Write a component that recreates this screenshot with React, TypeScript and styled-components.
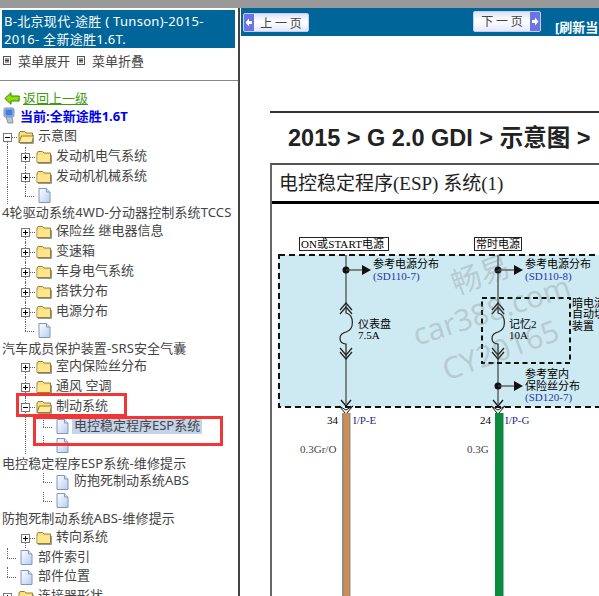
import styled, { createGlobalStyle } from 'styled-components';

const GlobalStyle = createGlobalStyle`
  html, body { margin: 0; padding: 0; height: 100%; overflow: hidden; background: #fff; }
  body { font-family: "Noto Sans", "Noto Sans CJK SC", sans-serif; }
`;

// --- PAGE FRAME ---
const Page = styled.div`
  position: relative;
  width: 599px;
  height: 596px;
  overflow: hidden;
  display: flex;
  flex-direction: column;
`;

const TopStrip = styled.div`
  height: 8px;
  flex: none;
  background: #999;
`;

const Panes = styled.div`
  flex: 1;
  min-height: 0;
  display: flex;
`;

const Sidebar = styled.aside`
  width: 240px;
  flex: none;
  overflow: hidden;
  padding-top: 2px;
  box-sizing: border-box;
  border-right: 2px solid #444;
`;

const Main = styled.main`
  flex: 1;
  min-width: 0;
  overflow: hidden;
  padding-left: 1px;
`;

// --- SIDEBAR ---
const BookTitle = styled.div`
  margin: 0 3px 0 2px;
  height: 38px;
  padding: 2px 2px 0 2px;
  box-sizing: border-box;
  background: #006699;
  color: #fff;
  font-size: 13px;
  line-height: 18px;
  letter-spacing: 0.3px;
`;

const MenuRow = styled.div`
  display: flex;
  align-items: center;
  height: 22px;
  margin-top: 1px;
  padding-left: 3px;
  font-size: 13px;
  color: #444;
`;

const MenuToggle = styled.span`
  display: flex;
  align-items: center;
  gap: 7px;
  margin-right: 7px;
`;

const Rule = styled.hr`
  margin: 9px 0 0;
  border: 0;
  height: 1px;
  background: #888;
`;

const BackRow = styled.div`
  display: flex;
  align-items: center;
  gap: 3px;
  height: 18px;
  margin-top: 8px;
  padding-left: 4px;
`;

const BackLink = styled.a`
  font-size: 13px;
  line-height: 18px;
  color: #3f9a10;
  text-decoration: underline;
`;

const CurrentRow = styled.div`
  display: flex;
  align-items: center;
  gap: 5px;
  height: 18px;
  padding: 0 0 2px 3px;
  box-sizing: border-box;
  font-size: 13px;
  font-weight: 700;
  color: #0000f0;
`;

const Tree = styled.div`
  margin-top: 2px;
`;

const RowBox = styled.div<{ $h: number }>`
  display: flex;
  align-items: stretch;
  height: ${p => p.$h}px;
  margin-left: -2px;
  white-space: nowrap;
`;

const Cell = styled.span<{ $line: Line }>`
  position: relative;
  width: 18px;
  flex: none;
  &::before {
    content: '';
    display: ${p => (p.$line === 'none' ? 'none' : 'block')};
    position: absolute;
    left: 9px;
    top: ${p => (p.$line === 'down' ? '50%' : '0')};
    bottom: ${p => (p.$line === 'corner' ? '50%' : '0')};
    border-left: 1px dotted #666;
  }
  &::after {
    content: '';
    display: ${p => (p.$line === 'corner' ? 'block' : 'none')};
    position: absolute;
    left: 9px;
    right: 0;
    top: 50%;
    border-top: 1px dotted #666;
  }
`;

const ToggleBox = styled.span`
  position: absolute;
  left: 5px;
  top: 50%;
  width: 9px;
  height: 9px;
  margin-top: -4px;
  box-sizing: border-box;
  border: 1px solid #777;
  background: #fff;
  z-index: 1;
  &::after {
    content: '';
    position: absolute;
    left: 8px;
    top: 3px;
    width: 5px;
    border-top: 1px dotted #666;
  }
  svg { display: block; }
`;

const IconSlot = styled.span`
  width: 20px;
  flex: none;
  display: flex;
  align-items: center;
  justify-content: center;
  svg { display: block; }
`;

const RowLabel = styled.span<{ $selected?: boolean; $heading?: boolean }>`
  align-self: ${p => (p.$selected ? 'flex-start' : 'center')};
  margin-left: ${p => (p.$heading ? '4px' : p.$selected ? '0' : '2px')};
  margin-top: ${p => (p.$selected ? '0' : p.$heading ? '0' : '-3px')};
  padding: 0 ${p => (p.$selected ? '2px' : '0')};
  background: ${p => (p.$selected ? '#c2d3ea' : 'transparent')};
  font-size: 13px;
  line-height: 17px;
  letter-spacing: ${p => (p.$heading ? '0.12px' : '0')};
  color: #444;
`;

const RedFrame = styled.div<{ $x: number; $y: number; $w: number; $h: number }>`
  position: absolute;
  left: ${p => p.$x}px;
  top: ${p => p.$y}px;
  width: ${p => p.$w}px;
  height: ${p => p.$h}px;
  box-sizing: border-box;
  border: 3px solid #f43535;
  pointer-events: none;
`;

// --- MAIN PANE ---
const PagerBar = styled.div`
  height: 28px;
  background: #006699;
`;

const PagerRow = styled.div`
  display: flex;
  align-items: flex-start;
  height: 28px;
  padding-left: 2px;
  white-space: nowrap;
`;

const PagerButton = styled.button<{ $next?: boolean }>`
  display: flex;
  flex: none;
  flex-direction: ${p => (p.$next ? 'row-reverse' : 'row')};
  align-items: stretch;
  width: ${p => (p.$next ? '68px' : '66px')};
  height: ${p => (p.$next ? '21px' : '19px')};
  margin: ${p => (p.$next ? '3px 0 0 164px' : '5px 0 0 0')};
  padding: 0;
  border: 1px solid #c8ccf4;
  border-radius: 2px;
  background: linear-gradient(#dfe3fb, #ffffff 45%, #e6e8fa);
  font: 12px "Noto Sans CJK SC", sans-serif;
  color: #444;
  overflow: hidden;
`;

const PagerArrow = styled.span`
  width: 10px;
  flex: none;
  display: flex;
  align-items: center;
  justify-content: center;
  background: #6c74e4;
`;

const PagerText = styled.span`
  flex: 1;
  text-align: center;
  line-height: 17px;
`;

const Refresh = styled.span`
  flex: none;
  margin: 11px 0 0 14px;
  font-size: 13px;
  line-height: 17px;
  font-weight: 700;
  color: #fff;
`;

const Sheet = styled.div`
  margin: 75px 0 0 29px;
  border-top: 2px solid #333;
  width: 400px;
`;

const SheetHeading = styled.h1`
  margin: 0;
  height: 50px;
  padding: 12px 0 0 18px;
  box-sizing: border-box;
  font: 700 23.5px/26px "Liberation Sans", "Noto Sans CJK SC", sans-serif;
  color: #222;
  white-space: nowrap;
`;

const DiagramFrame = styled.div`
  border-top: 2px solid #555;
  border-left: 2px solid #666;
`;

const DiagramTitle = styled.h2`
  margin: 0;
  height: 36px;
  padding-left: 7px;
  border-bottom: 3px solid #000;
  font: 400 19px/38px "Liberation Serif", "Noto Sans CJK SC", serif;
  color: #222;
  white-space: nowrap;
`;

const DiagramSvg = styled.svg`
  display: block;
  font-family: "Liberation Serif", "Noto Sans CJK SC", serif;
  font-size: 11px;
`;

// --- ICONS ---
const Folder = ({ open }: { open?: boolean }) => (
  <svg width="16" height="14" viewBox="0 0 16 14">
    <path d="M1 3 L2 1.5 H6.5 L8 3 H14.5 V12.5 H1 Z" fill="#fbdf78" stroke="#94803a" />
    {open ? (
      <path d="M1 12.5 L3.5 6 H15.5 L14 12.5 Z" fill="#ffeb98" stroke="#94803a" />
    ) : (
      <path d="M1.5 5 H14 V12 H1.5 Z" fill="#fde68c" />
    )}
    <path d="M2 13.5 H15.5 V5" fill="none" stroke="#999" />
  </svg>
);

const Doc = () => (
  <svg width="13" height="15" viewBox="0 0 13 15">
    <defs>
      <linearGradient id="docFill" x1="0" y1="0" x2="1" y2="1">
        <stop offset="0" stopColor="#ffffff" />
        <stop offset="1" stopColor="#b9cdf0" />
      </linearGradient>
    </defs>
    <path d="M1 .5 H8.5 L12 4 V14.5 H1 Z" fill="url(#docFill)" stroke="#8096c0" />
    <path d="M8.5 .5 V4 H12" fill="#dfe8f8" stroke="#8096c0" />
  </svg>
);

const MenuIcon = () => (
  <svg width="8" height="9" viewBox="0 0 8 9">
    <rect x=".5" y=".5" width="7" height="8" fill="#fff" stroke="#555" />
    <path d="M2 3 H6 M2 4.5 H6 M2 6 H6" stroke="#333" />
  </svg>
);

const BackArrow = () => (
  <svg width="16" height="13" viewBox="0 0 16 13">
    <path d="M.8 6.5 L7 .8 V4 H15.2 V9 H7 V12.2 Z" fill="#8fdc10" stroke="#2f8a00" />
  </svg>
);

const Computer = () => (
  <svg width="12" height="17" viewBox="0 0 12 17">
    <rect x="1" y="1" width="10" height="9" rx="1.5" fill="#9fc2ee" stroke="#7d8fa8" />
    <rect x="2.5" y="2.5" width="7" height="6" fill="#3f7fe0" />
    <path d="M3 10 L5 16 H10 L9 10 Z" fill="#b8c4d4" stroke="#8a96a8" />
  </svg>
);

const Glyph = ({ open }: { open?: boolean }) => (
  <svg width="7" height="7" viewBox="0 0 7 7">
    <path d={open ? 'M1 3.5 H6' : 'M1 3.5 H6 M3.5 1 V6'} stroke="#000" />
  </svg>
);

const PagerGlyph = ({ next }: { next?: boolean }) => (
  <svg width="8" height="9" viewBox="0 0 8 9">
    <path d={next ? 'M1 3 H4 V.5 L7.5 4.5 L4 8.5 V6 H1 Z' : 'M7 3 H4 V.5 L.5 4.5 L4 8.5 V6 H7 Z'} fill="#fff" />
  </svg>
);

// --- TREE DATA ---
type Line = 'none' | 'through' | 'down' | 'corner';
type Node = {
  lines?: Line[];
  toggle?: 'plus' | 'minus';
  icon?: 'folder' | 'open' | 'doc';
  label?: string;
  h: number;
  selected?: boolean;
};

const F = 20;
const D = 19;
const E = 18;
const T = 17.5;

const TREE: Node[] = [
  { lines: ['down'], toggle: 'minus', icon: 'open', label: '示意图', h: F },
  { lines: ['through', 'through'], toggle: 'plus', icon: 'folder', label: '发动机电气系统', h: F },
  { lines: ['through', 'through'], toggle: 'plus', icon: 'folder', label: '发动机机械系统', h: F },
  { lines: ['through', 'corner'], icon: 'doc', h: 17 },
  { label: '4轮驱动系统4WD-分动器控制系统TCCS', h: T },
  { lines: ['none', 'down'], toggle: 'plus', icon: 'folder', label: '保险丝 继电器信息', h: F },
  { lines: ['none', 'through'], toggle: 'plus', icon: 'folder', label: '变速箱', h: F },
  { lines: ['none', 'through'], toggle: 'plus', icon: 'folder', label: '车身电气系统', h: F },
  { lines: ['none', 'through'], toggle: 'plus', icon: 'folder', label: '搭铁分布', h: F },
  { lines: ['none', 'through'], toggle: 'plus', icon: 'folder', label: '电源分布', h: F },
  { lines: ['none', 'corner'], icon: 'doc', h: E },
  { label: '汽车成员保护装置-SRS安全气囊', h: T },
  { lines: ['none', 'down'], toggle: 'plus', icon: 'folder', label: '室内保险丝分布', h: F },
  { lines: ['none', 'through'], toggle: 'plus', icon: 'folder', label: '通风 空调', h: F },
  { lines: ['none', 'through'], toggle: 'minus', icon: 'open', label: '制动系统', h: F },
  { lines: ['none', 'through', 'corner'], icon: 'doc', label: '电控稳定程序ESP系统', h: D, selected: true },
  { lines: ['none', 'through', 'corner'], icon: 'doc', h: E },
  { label: '电控稳定程序ESP系统-维修提示', h: 18.5 },
  { lines: ['none', 'none', 'corner'], icon: 'doc', label: '防抱死制动系统ABS', h: D },
  { lines: ['none', 'none', 'corner'], icon: 'doc', h: E },
  { label: '防抱死制动系统ABS-维修提示', h: T },
  { lines: ['none', 'down'], toggle: 'plus', icon: 'folder', label: '转向系统', h: 21 },
  { lines: ['corner'], icon: 'doc', label: '部件索引', h: D },
  { lines: ['corner'], icon: 'doc', label: '部件位置', h: F },
  { lines: ['down'], toggle: 'plus', icon: 'folder', label: '连接器形状', h: F },
];

const TreeRow = ({ node }: { node: Node }) => {
  const lines = node.lines ?? [];
  return (
    <RowBox $h={node.h}>
      {lines.map((line, i) => (
        <Cell key={i} $line={line}>
          {node.toggle && i === lines.length - 1 && (
            <ToggleBox>
              <Glyph open={node.toggle === 'minus'} />
            </ToggleBox>
          )}
        </Cell>
      ))}
      {node.icon && (
        <IconSlot>
          {node.icon === 'doc' ? <Doc /> : <Folder open={node.icon === 'open'} />}
        </IconSlot>
      )}
      {node.label && (
        <RowLabel $selected={node.selected} $heading={!node.icon}>
          {node.label}
        </RowLabel>
      )}
    </RowBox>
  );
};

// --- WIRING DIAGRAM PARTS ---
const Fuse = ({ x }: { x: number }) => (
  <g fill="none" stroke="#222" strokeWidth="1.2">
    <path d={`M${x - 6} 309 L${x} 302 L${x + 6} 309 M${x - 6} 313 L${x} 306 L${x + 6} 313`} />
    <path d={`M${x} 306 V312 C${x + 8} 314 ${x + 9} 328 ${x} 331 C${x - 8} 333 ${x - 8} 342 ${x} 343 V358`} />
    <path d={`M${x - 6} 347 L${x} 354 L${x + 6} 347 M${x - 6} 351 L${x} 358 L${x + 6} 351`} />
  </g>
);

const Branch = ({ x, y }: { x: number; y: number }) => (
  <g>
    <circle cx={x} cy={y} r="3.5" fill="#111" />
    <path d={`M${x} ${y} H${x + 17}`} stroke="#444" strokeWidth="1.2" />
    <path d={`M${x + 16} ${y - 5} L${x + 25} ${y} L${x + 16} ${y + 5} Z`} fill="#111" />
  </g>
);

const WireEnd = ({ x }: { x: number }) => (
  <g>
    <path d={`M${x - 7} 405 L${x} 413 L${x + 7} 405 L${x} 409 Z`} fill="#fff" stroke="#111" />
    <path d={`M${x - 5} 399 L${x} 405 L${x + 5} 399`} fill="none" stroke="#111" strokeWidth="1.2" />
  </g>
);

const Diagram = () => (
  <DiagramSvg width="327" height="393" viewBox="272 203 327 393">
    <rect x="279" y="254" width="340" height="152" fill="#cde9f1" stroke="#111" strokeWidth="2" strokeDasharray="6 4" />

    <rect x="299.5" y="236.5" width="89" height="13" fill="#fff" stroke="#222" />
    <text x="301" y="247" letterSpacing="0.1">ON或START电源</text>
    <rect x="474.5" y="236.5" width="47" height="13" fill="#fff" stroke="#222" />
    <text x="476" y="247">常时电源</text>

    {/* left circuit */}
    <path d="M346 254 V306 M346 358 V403 M498 254 V306 M498 358 V403" stroke="#444" strokeWidth="1.2" fill="none" />
    <Branch x={346} y={269} />
    <text x="373" y="267">参考电源分布</text>
    <text x="373" y="279" fill="#2a36a8">(SD110-7)</text>
    <Fuse x={346} />
    <text x="358" y="327">仪表盘</text>
    <text x="358" y="338">7.5A</text>
    <WireEnd x={346} />

    {/* right circuit */}
    <Branch x={498} y={269} />
    <text x="525" y="267">参考电源分布</text>
    <text x="525" y="279" fill="#2a36a8">(SD110-8)</text>
    <rect x="482" y="297" width="88" height="65" fill="none" stroke="#111" strokeWidth="2" strokeDasharray="5 3.5" />
    <Fuse x={498} />
    <text x="509" y="327">记忆2</text>
    <text x="509" y="338">10A</text>
    <text x="572" y="306">暗电流</text>
    <text x="572" y="317">自动切</text>
    <text x="572" y="329">装置</text>
    <Branch x={498} y={385} />
    <text x="525" y="377">参考室内</text>
    <text x="525" y="389">保险丝分布</text>
    <text x="525" y="400" fill="#2a36a8">(SD120-7)</text>
    <WireEnd x={498} />

    {/* wires under the panel */}
    <rect x="342" y="412" width="8.5" height="184" fill="#8f8f8f" />
    <rect x="344" y="412" width="5" height="184" fill="#d28c4c" />
    <rect x="495" y="412" width="8.5" height="184" fill="#0c8a40" />
    <text x="327" y="423">34</text>
    <text x="353" y="423" fill="#2a2a90">I/P-E</text>
    <text x="300" y="452" fill="#444">0.3Gr/O</text>
    <text x="480" y="423">24</text>
    <text x="505" y="423" fill="#2a2a90">I/P-G</text>
    <text x="467" y="452" fill="#444">0.3G</text>

    {/* watermark */}
    <g fill="#777" fillOpacity="0.27" fontFamily='"Noto Sans", "Noto Sans CJK SC", sans-serif'>
      <text x="456" y="294" fontSize="30" transform="rotate(-20 456 294)">畅易</text>
      <text x="417" y="345" fontSize="30" transform="rotate(-18 417 345)">car388.com</text>
      <text x="447" y="380" fontSize="30" transform="rotate(-20 447 380)">CY20165</text>
    </g>
  </DiagramSvg>
);

export default function App() {
  return (
    <Page>
      <GlobalStyle />
      <TopStrip />
      <Panes>
        <Sidebar>
          <BookTitle>B-北京现代-途胜 ( Tunson)-2015-2016- 全新途胜1.6T.</BookTitle>
          <MenuRow>
            <MenuToggle><MenuIcon />菜单展开</MenuToggle>
            <MenuToggle><MenuIcon />菜单折叠</MenuToggle>
          </MenuRow>
          <Rule />
          <BackRow><BackArrow /><BackLink>返回上一级</BackLink></BackRow>
          <CurrentRow><Computer />当前:全新途胜1.6T</CurrentRow>
          <Tree>
            {TREE.map((node, i) => <TreeRow key={i} node={node} />)}
          </Tree>
        </Sidebar>
        <Main>
          <PagerBar>
            <PagerRow>
              <PagerButton>
                <PagerArrow><PagerGlyph /></PagerArrow>
                <PagerText>上 一 页</PagerText>
              </PagerButton>
              <PagerButton $next>
                <PagerArrow><PagerGlyph next /></PagerArrow>
                <PagerText>下 一 页</PagerText>
              </PagerButton>
              <Refresh>[刷新当前页]</Refresh>
            </PagerRow>
          </PagerBar>
          <Sheet>
            <SheetHeading>2015 &gt; G 2.0 GDI &gt; 示意图 &gt; 电控稳定程序</SheetHeading>
            <DiagramFrame>
              <DiagramTitle>电控稳定程序(ESP) 系统(1)</DiagramTitle>
              <Diagram />
            </DiagramFrame>
          </Sheet>
        </Main>
      </Panes>
      <RedFrame $x={16} $y={393} $w={111} $h={24} />
      <RedFrame $x={33} $y={416} $w={190} $h={30} />
    </Page>
  );
}
